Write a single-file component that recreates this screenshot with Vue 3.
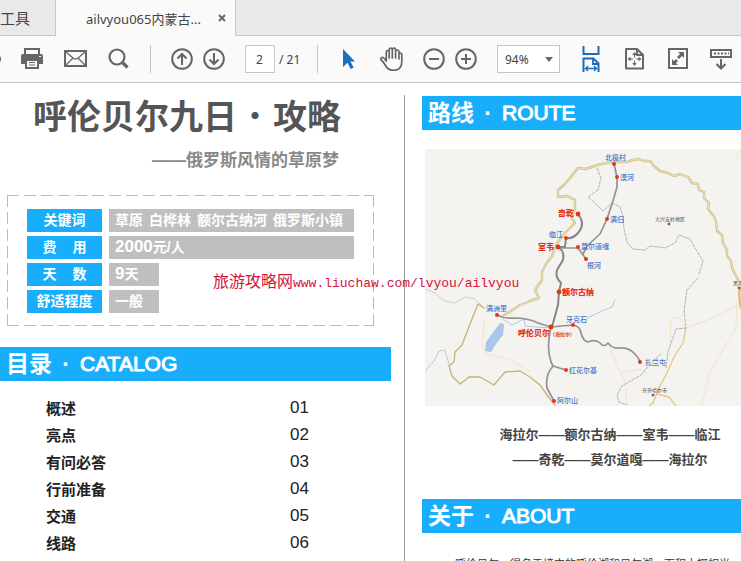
<script setup>
import { ref } from 'vue'

const page = ref('2')
const zoom = ref('94%')

const facts = [
  { label: ['关键词'], words: ['草原', '白桦林', '额尔古纳河', '俄罗斯小镇'], wide: true },
  { label: ['费', '用'], amount: '2000', words: ['元/人'], wide: true },
  { label: ['天', '数'], amount: '9', words: ['天'], wide: false },
  { label: ['舒适程度'], words: ['一般'], wide: false },
]

const catalog = [
  ['概述', '01'],
  ['亮点', '02'],
  ['有问必答', '03'],
  ['行前准备', '04'],
  ['交通', '05'],
  ['线路', '06'],
]

const stops = [
  { name: '北极村', x: 614, y: 164, tx: 605, ty: 160 },
  { name: '漠河', x: 617, y: 177, tx: 620, ty: 180 },
  { name: '满归', x: 607, y: 219, tx: 610, ty: 222 },
  { name: '临江', x: 566, y: 238, tx: 549, ty: 237 },
  { name: '莫尔道嘎', x: 578, y: 247, tx: 581, ty: 249 },
  { name: '根河', x: 586, y: 259, tx: 587, ty: 268 },
  { name: '满洲里', x: 497, y: 315, tx: 486, ty: 311 },
  { name: '牙克石', x: 573, y: 325, tx: 566, ty: 322 },
  { name: '扎兰屯', x: 640, y: 362, tx: 645, ty: 365 },
  { name: '红花尔基', x: 566, y: 370, tx: 569, ty: 373 },
  { name: '阿尔山', x: 554, y: 401, tx: 557, ty: 403 },
]

const mainStops = [
  { name: '奇乾', x: 578, y: 214, tx: 558, ty: 216 },
  { name: '室韦', x: 558, y: 247, tx: 538, ty: 250 },
  { name: '额尔古纳', x: 559, y: 292, tx: 562, ty: 295 },
  { name: '呼伦贝尔', x: 551, y: 327, tx: 518, ty: 336 },
]
</script>

<template>
  <div class="viewer">
    <nav class="tabs">
      <button class="tab tools">工具</button>
      <div class="tab active">
        <span>ailvyou065内蒙古...</span>
        <button class="close" aria-label="关闭">
          <svg width="8" height="8" viewBox="0 0 8 8"><path d="M1 1l6 6M7 1l-6 6" stroke="#666" stroke-width="2" /></svg>
        </button>
      </div>
    </nav>

    <div class="toolbar">
      <svg class="edge" width="20" height="24" viewBox="0 0 20 24"><circle cx="-3" cy="12" r="4" fill="#666" /></svg>
      <div class="group roomy">
        <button class="icon" aria-label="打印">
          <svg viewBox="0 0 24 24">
            <path d="M5 7V2h14v5" fill="none" stroke="#666" stroke-width="2" />
            <path d="M3 7h18q2 0 2 2v8h-4v-4H5v4H1V9q0-2 2-2z" fill="#666" />
            <rect x="6" y="13" width="12" height="8" fill="#fafafa" stroke="#666" stroke-width="2" />
            <path d="M9 15.500h6M9 18h6" stroke="#666" stroke-width="1" /><rect x="19" y="9" width="2" height="1" fill="#fff" />
          </svg>
        </button>
        <button class="icon" aria-label="邮件">
          <svg viewBox="0 0 24 24" fill="none" stroke="#666">
            <rect x="2" y="4" width="21" height="15" stroke-width="2" />
            <path d="M3 5l7 6q2.500 2 5 0l7-6M3 18l7-7M22 18l-7-7" stroke-width="1.300" />
          </svg>
        </button>
        <button class="icon" aria-label="查找">
          <svg viewBox="0 0 24 24" fill="none" stroke="#666">
            <circle cx="11" cy="10" r="7.500" stroke-width="2.200" /><path d="M16.500 15.500l5 5" stroke-width="3.200" />
          </svg>
        </button>
      </div>
      <i class="rule"></i>
      <div class="group tight">
        <button class="icon" aria-label="上一页">
          <svg viewBox="0 0 24 24" fill="none" stroke="#666" stroke-width="2">
            <circle cx="12" cy="12" r="9.800" /><path d="M12 18V7M7.500 11.500L12 7l4.500 4.500" />
          </svg>
        </button>
        <button class="icon" aria-label="下一页">
          <svg viewBox="0 0 24 24" fill="none" stroke="#666" stroke-width="2">
            <circle cx="12" cy="12" r="9.800" /><path d="M12 6v11M7.500 12.500L12 17l4.500-4.500" />
          </svg>
        </button>
      </div>
      <label class="pager"><input v-model="page" aria-label="页码" /><span>/ 21</span></label>
      <i class="rule"></i>
      <div class="group pointers">
        <button class="icon" aria-label="选择">
          <svg viewBox="0 0 24 24"><path d="M6 2v18l4.500-4.200 3.200 6.200 3-1.500-3.200-6H18z" fill="#1b70c0" /></svg>
        </button>
        <button class="icon" aria-label="手形">
          <svg viewBox="0 0 24 24" fill="none" stroke="#666" stroke-width="1.700" stroke-linejoin="round" stroke-linecap="round">
            <path d="M7.300 14V5Q7.400 3.500 8.700 3.500T10.200 5v6V2.700Q10.300 1.200 11.800 1.200T13.300 2.700V11 2.700Q13.500 1.200 15 1.200T16.600 2.700V11 4.500Q16.800 3 18.300 3T20 4.500V6.500Q22.500 5.500 22.800 7.500V15Q22.500 23.300 14.500 23.300 9 23.300 6.500 18.500 5 15.500 2.200 13 1 11.200 2.800 10.500 4.500 10 7.300 14zM20 6.500V12" />
          </svg>
        </button>
      </div>
      <div class="group tight">
        <button class="icon" aria-label="缩小">
          <svg viewBox="0 0 24 24" fill="none" stroke="#666" stroke-width="2"><circle cx="12" cy="12" r="9.800" /><path d="M7 12h10" /></svg>
        </button>
        <button class="icon" aria-label="放大">
          <svg viewBox="0 0 24 24" fill="none" stroke="#666" stroke-width="2"><circle cx="12" cy="12" r="9.800" /><path d="M7 12h10M12 7v10" /></svg>
        </button>
      </div>
      <div class="zoom">
        <select v-model="zoom" aria-label="缩放"><option>94%</option><option>100%</option></select>
        <svg width="8" height="5" viewBox="0 0 8 5"><path d="M0 0h8L4 5z" fill="#666" /></svg>
      </div>
      <div class="group roomy last">
        <button class="icon tall" aria-label="适合宽度">
          <svg viewBox="0 0 24 26" fill="none" stroke="#1b6cb4" stroke-width="2">
            <path d="M4.500 0v8h15V0M4.500 26V12.500h10l5 5V26" />
            <path d="M14 12.500V18h5.500" stroke-width="1.800" /><path d="M7 22.500h10M9 20l-2.500 2.500L9 25M15 20l2.500 2.500L15 25" stroke-width="1.300" />
          </svg>
        </button>
        <button class="icon" aria-label="适合页面">
          <svg viewBox="0 0 24 24" fill="none" stroke="#666" stroke-width="2">
            <path d="M4 2h11l6 6v13.500H4zM15 2v6h6" stroke-linejoin="round" />
            <path d="M12.500 6v12M6.500 12h12" stroke-width="1.200" stroke-dasharray="4.500 3" />
            <path d="M12.500 5l2.300 3h-4.600zM12.500 19l2.300-3h-4.600zM5.500 12l3-2.300v4.600zM19.500 12l-3-2.300v4.600z" fill="#666" stroke="none" />
          </svg>
        </button>
        <button class="icon" aria-label="全屏">
          <svg viewBox="0 0 24 24" fill="none" stroke="#666">
            <rect x="4" y="2" width="18" height="19" stroke-width="2" />
            <path d="M13 5h6v6l-2-2-3 3-2-2 3-3zM13 18H7v-6l2 2 2-2 2 2-2 2z" fill="#666" stroke="none" />
          </svg>
        </button>
        <button class="icon" aria-label="隐藏工具栏">
          <svg viewBox="0 0 24 24" fill="none" stroke="#666">
            <rect x="3" y="3" width="20" height="7" stroke-width="2" /><path d="M6 6.500h15" stroke-width="2" stroke-dasharray="2 1.500" />
            <path d="M13 12v9M8.500 17l4.500 4.500 4.500-4.500" stroke-width="2" />
          </svg>
        </button>
      </div>
    </div>

    <main class="document">
      <section class="left">
        <h1><span>呼伦贝尔九日</span><span class="dot">·</span><span>攻略</span></h1>
        <p class="subtitle">——俄罗斯风情的草原梦</p>

        <dl class="facts">
          <div v-for="fact in facts" :key="fact.label[0]" class="fact">
            <dt><span v-for="part in fact.label" :key="part">{{ part }}</span></dt>
            <dd :class="{ wide: fact.wide }">
              <span v-for="word in fact.words" :key="word"><span v-if="fact.amount" class="amount">{{ fact.amount }}</span>{{ word }}</span>
            </dd>
          </div>
          <div class="watermark"><span>旅游攻略网</span>www.liuchaw.com/lvyou/ailvyou</div>
        </dl>

        <h2>目录<span class="dot">·</span><span class="en">CATALOG</span></h2>
        <ul class="catalog">
          <li v-for="[name, number] in catalog" :key="number"><span>{{ name }}</span><span class="number">{{ number }}</span></li>
        </ul>
      </section>

      <section class="right">
        <h2>路线<span class="dot">·</span><span class="en">ROUTE</span></h2>
        <svg class="map" viewBox="425 149 316 257" preserveAspectRatio="xMinYMin slice">
          <rect x="425" y="149" width="900" height="257" fill="#f4f3f0" />
          <g fill="none" stroke-linejoin="round" stroke-linecap="round">
            <g stroke="#eee6c8" stroke-width="1">
              <path d="M686 328l30-11 21-12 4-5M737 303l-1 25-14 24-13 22-7 31M686 328l-7-11-8 2-1 26M608 345l10 22 7 15 2 23M620 373l20-4 10 6M485 318l-3 28 4 8 23 5 20 12M741 150l-6 9" />
            </g>
            <path d="M686 328l-3 15-9 14-6 14-9 17-6 15-8 6M657 394l12 3 7 9" stroke="#e8c68a" stroke-width="1.300" />
            <path d="M741 288l-2 4 1 12 1 4" stroke="#e0b869" stroke-width="2" />
            <path d="M425 289l10 4 9 8 11 2 10-6 10 2 9 9" stroke="#d0d0cd" />
            <path d="M425 371l9-10 5-10 6-1 2 8 3 8M503 319l9 6 6-3 6-3 1 7 12 1 14 1M587 318l15-7 10-4 3-7" stroke="#b9c5df" />
            <g stroke="#b4b4b8" stroke-width="1" stroke-dasharray="3 1.500">
              <path d="M597 168l4 10-3 12-10 7 9 8 6 6 9-8 8 4 3 9 1 13 3 13 6 7 12 1 5-4 15 2 10-5 4-8 11 4 5 9 8 13-4 13M698 278l-11 12-3 21 2 17-10 1-8 23-2 16M661 354l-10 9-10 12-19 11-5 9 2 7 8 3" />
            </g>
            <path d="M578 168l-8 10-6 7-6 5 0 7 9-1 8 4 0 9-4 8 4 6-6 6-6 6-7 10-4 11-6 8-4 8 0 8-7 10 4 8-9 3-10 4-9 6-7 4M578 168l8 1 11-4 15-3 15 0 6-2 6-1 5 2 6 0 4 5 6 5 8 2 6 3 6-2 8 3 4 6 6 1 1 6 5 2 0 6 5 5-1 6 5 6 3 6 1 10 5 4 1 8 4 7 0 6 4 5 1 7 5 10 5 9" stroke="#cdbf88" stroke-width="2.400" />
            <path d="M578 168l-8 10-6 7-6 5 0 7 9-1 8 4 0 9-4 8 4 6-6 6-6 6-7 10-4 11-6 8-4 8 0 8-7 10 4 8-9 3-10 4-9 6-7 4M578 168l8 1 11-4 15-3 15 0 6-2 6-1 5 2 6 0 4 5 6 5 8 2 6 3 6-2 8 3 4 6 6 1 1 6 5 2 0 6 5 5-1 6 5 6 3 6 1 10 5 4 1 8 4 7 0 6 4 5 1 7 5 10 5 9" stroke="#ece3bd" />
            <path d="M484 308l-6-4-8 20-8 21-7 7-1 10-5 4 3 10 8 8 9-7 11 0 14 8 11-13 15-1 10 6 10 8 10 14 5 6" stroke="#c7b173" stroke-width="1.300" />
            <g stroke="#858585" stroke-width="2">
              <path d="M578 214q8 10 0 19-5 6-12 5l-1 9-7 0q7 4 5 13l-6 10q-2 7 4 13l-2 9-1 13-6 22" />
              <g stroke="#929292" stroke-width="1.700">
                <path d="M558 248h20l8 11M583 254l4-8 13-12 7-15 6-18 4-14v-10l-3-13M497 315q8 4 17 3 14 0 24 5l13 4 22-2q7 1 8 8 2 8 7 9 8-3 12 1 4 5 8 0 5 6 10 5 10-1 16 5 5 5 6 9M551 327q-5 20 0 35l2 4 13 4M553 366q-8 9-6 22l7 13" />
              </g>
            </g>
          </g>
          <path d="M500 323l4 1-1 11-7 9-5 8-6-1 1-9 5-7z" fill="#a9c7e8" />
          <g v-for="s in stops" :key="s.name">
            <circle :cx="s.x" :cy="s.y" r="2" fill="#df381a" /><text :x="s.tx" :y="s.ty" class="place">{{ s.name }}</text>
          </g>
          <g v-for="s in mainStops" :key="s.name">
            <circle :cx="s.x" :cy="s.y" r="2.400" fill="#df381a" /><text :x="s.tx" :y="s.ty" class="main-place">{{ s.name }}</text>
          </g>
          <text x="550" y="336" class="aside">（海拉尔）</text>
          <g fill="#b66" stroke="#844"><circle cx="669" cy="224" r="1" /><circle cx="653" cy="395" r="1" /><circle cx="739" cy="288" r="1" /></g>
          <text x="655" y="221" class="city">大兴安岭地区</text>
          <text x="642" y="392" class="city">齐齐哈尔市</text>
          <text x="733" y="285" class="city">黑河</text>
        </svg>
        <p class="route">海拉尔——额尔古纳——室韦——临江<br />——奇乾——莫尔道嘎——海拉尔</p>
        <h2>关于<span class="dot">·</span><span class="en">ABOUT</span></h2>
        <p class="about">呼伦贝尔，得名于境内的呼伦湖和贝尔湖，面积大概相当</p>
      </section>
    </main>
  </div>
</template>

<style>
body { margin: 0; }
</style>

<style scoped>
* { box-sizing: border-box; }
.viewer {
  display: flex;
  flex-direction: column;
  height: 100vh;
  overflow: hidden;
  background: #fff;
  font-family: "Liberation Sans", "Noto Sans CJK SC", sans-serif;
}
h1, h2, p, dl, dd, ul { margin: 0; padding: 0; }
button { padding: 0; border: 0; background: none; font: inherit; color: inherit; }
svg { display: block; }

.tabs {
  display: flex;
  flex: none;
  height: 36px;
  background: #e9e9e9;
  border-bottom: 1px solid #c6c6c6;
  font-family: "Noto Sans", "Noto Sans CJK SC", sans-serif;
  color: #444;
}
.tools { width: 55px; padding-right: 25px; font-size: 15px; display: flex; justify-content: flex-end; align-items: center; white-space: nowrap; }
.active {
  display: flex;
  align-items: center;
  justify-content: space-between;
  width: 181px;
  height: 36px;
  padding: 0 9px 0 30px;
  border: 1px solid #c6c6c6;
  border-width: 0 1px;
  background: #fafafa;
  font-size: 13px;
  white-space: nowrap;
}

.toolbar {
  display: flex;
  flex: none;
  align-items: center;
  height: 47px;
  background: #fafafa;
  border-bottom: 1px solid #c6c6c6;
  font-family: "Noto Sans", sans-serif;
  font-size: 12px;
  color: #444;
}
.toolbar > * { flex: none; }
.group { display: flex; align-items: center; margin-left: 19px; }
.edge + .group { margin-left: 0; }
.roomy { gap: 19px; }
.tight { gap: 8px; }
.pointers { gap: 18px; }
.icon { width: 24px; height: 24px; }
.icon svg { width: 24px; height: 24px; }
.tall, .tall svg { height: 26px; }
.rule { width: 1px; height: 28px; margin-left: 20px; background: #c6c6c6; }
.pager { display: flex; align-items: center; gap: 4px; width: 52px; margin-left: 19px; white-space: nowrap; }
.pager input {
  width: 30px;
  height: 28px;
  padding: 0 0 0 10px;
  border: 1px solid #c6c6c6;
  background: #fff;
  font: inherit;
  color: inherit;
}
.zoom { position: relative; width: 63px; margin-left: 19px; }
.zoom select {
  width: 100%;
  height: 28px;
  padding: 0 7px;
  border: 1px solid #c6c6c6;
  border-radius: 0;
  appearance: none;
  background: #fff;
  font: inherit;
  color: inherit;
}
.zoom svg { position: absolute; right: 7px; top: 12px; pointer-events: none; }

.document { display: flex; flex: 1; min-height: 0; padding-top: 12px; overflow: hidden; }
.left { flex: none; width: 405px; height: 100vh; padding-right: 13px; border-right: 1px solid #999; }
.right { flex: 1; min-width: 0; padding: 1px 0 0 17px; }

h1 {
  display: flex;
  padding-left: 33px;
  font-size: 34px;
  line-height: 40px;
  color: #555;
  font-family: "Noto Sans CJK SC", sans-serif;
}
h1 .dot { width: 36px; text-align: center; font-size: 28px; }
.subtitle { margin-top: 14px; padding-right: 52px; font-size: 17px; line-height: 24px; font-weight: 700; color: #888; text-align: right; }

.facts {
  position: relative;
  display: grid;
  gap: 4px;
  width: 367px;
  margin: 22px 0 0 7px;
  padding: 14px 20px 13px;
  background:
    repeating-linear-gradient(90deg, #bbb 0 12px, transparent 12px 17px) 0 0 / 100% 1px no-repeat,
    repeating-linear-gradient(90deg, #bbb 0 12px, transparent 12px 17px) 0 100% / 100% 1px no-repeat,
    repeating-linear-gradient(#bbb 0 12px, transparent 12px 17px) 0 0 / 1px 100% no-repeat,
    repeating-linear-gradient(#bbb 0 12px, transparent 12px 17px) 100% 0 / 1px 100% no-repeat;
}
.fact { display: flex; gap: 7px; height: 23px; color: #fff; font-size: 14px; font-weight: 700; line-height: 23px; white-space: nowrap; }
dt { display: flex; justify-content: center; gap: 16px; width: 75px; background: #18aefc; }
dd { display: flex; gap: 6px; width: 50px; padding-left: 6px; background: #bfbfbf; }
.wide { width: 245px; }
.amount { font-size: 17px; line-height: 20px; }
.watermark {
  position: absolute;
  left: 206px;
  top: 75px;
  display: flex;
  align-items: baseline;
  font-family: "Liberation Mono", monospace;
  font-size: 13px;
  line-height: 20px;
  color: #d0143c;
  white-space: nowrap;
}
.watermark span { font-family: "Noto Sans CJK SC", sans-serif; font-size: 16px; }

h2 {
  display: flex;
  align-items: center;
  height: 34px;
  padding-left: 6px;
  background: #18aefc;
  color: #fff;
  font-size: 23px;
  line-height: 34px;
}
h2 .dot { width: 28px; text-align: center; }
h2 .en { font-size: 21px; font-weight: 400; -webkit-text-stroke: 1px #fff; }
.left h2 { margin-top: 21px; width: 391px; }
.catalog { padding: 13px 0 0 46px; list-style: none; }
.catalog li { display: flex; align-items: center; height: 27px; font-size: 15px; font-weight: 700; color: #222; }
.catalog span:first-child { width: 244px; }
.catalog .number { font-size: 17px; font-weight: 400; }

.map { width: calc(100% - 3px); height: 257px; margin: 19px 0 0 3px; }
.map text { font-family: "Noto Sans CJK SC", sans-serif; }
.place { font-size: 7px; fill: #3f74c6; font-weight: 500; }
.main-place { font-size: 8px; fill: #e03418; font-weight: 900; }
.aside { font-size: 5px; fill: #e03418; font-weight: 700; }
.city { font-size: 5px; fill: #444; }
.route { margin: 16px 0 27px; padding-left: 57px; font-size: 13px; line-height: 25px; font-weight: 700; color: #444; text-align: center; white-space: nowrap; }
.about { padding: 22px 0 0 33px; font-size: 11px; line-height: 18px; color: #333; white-space: nowrap; }
</style>
